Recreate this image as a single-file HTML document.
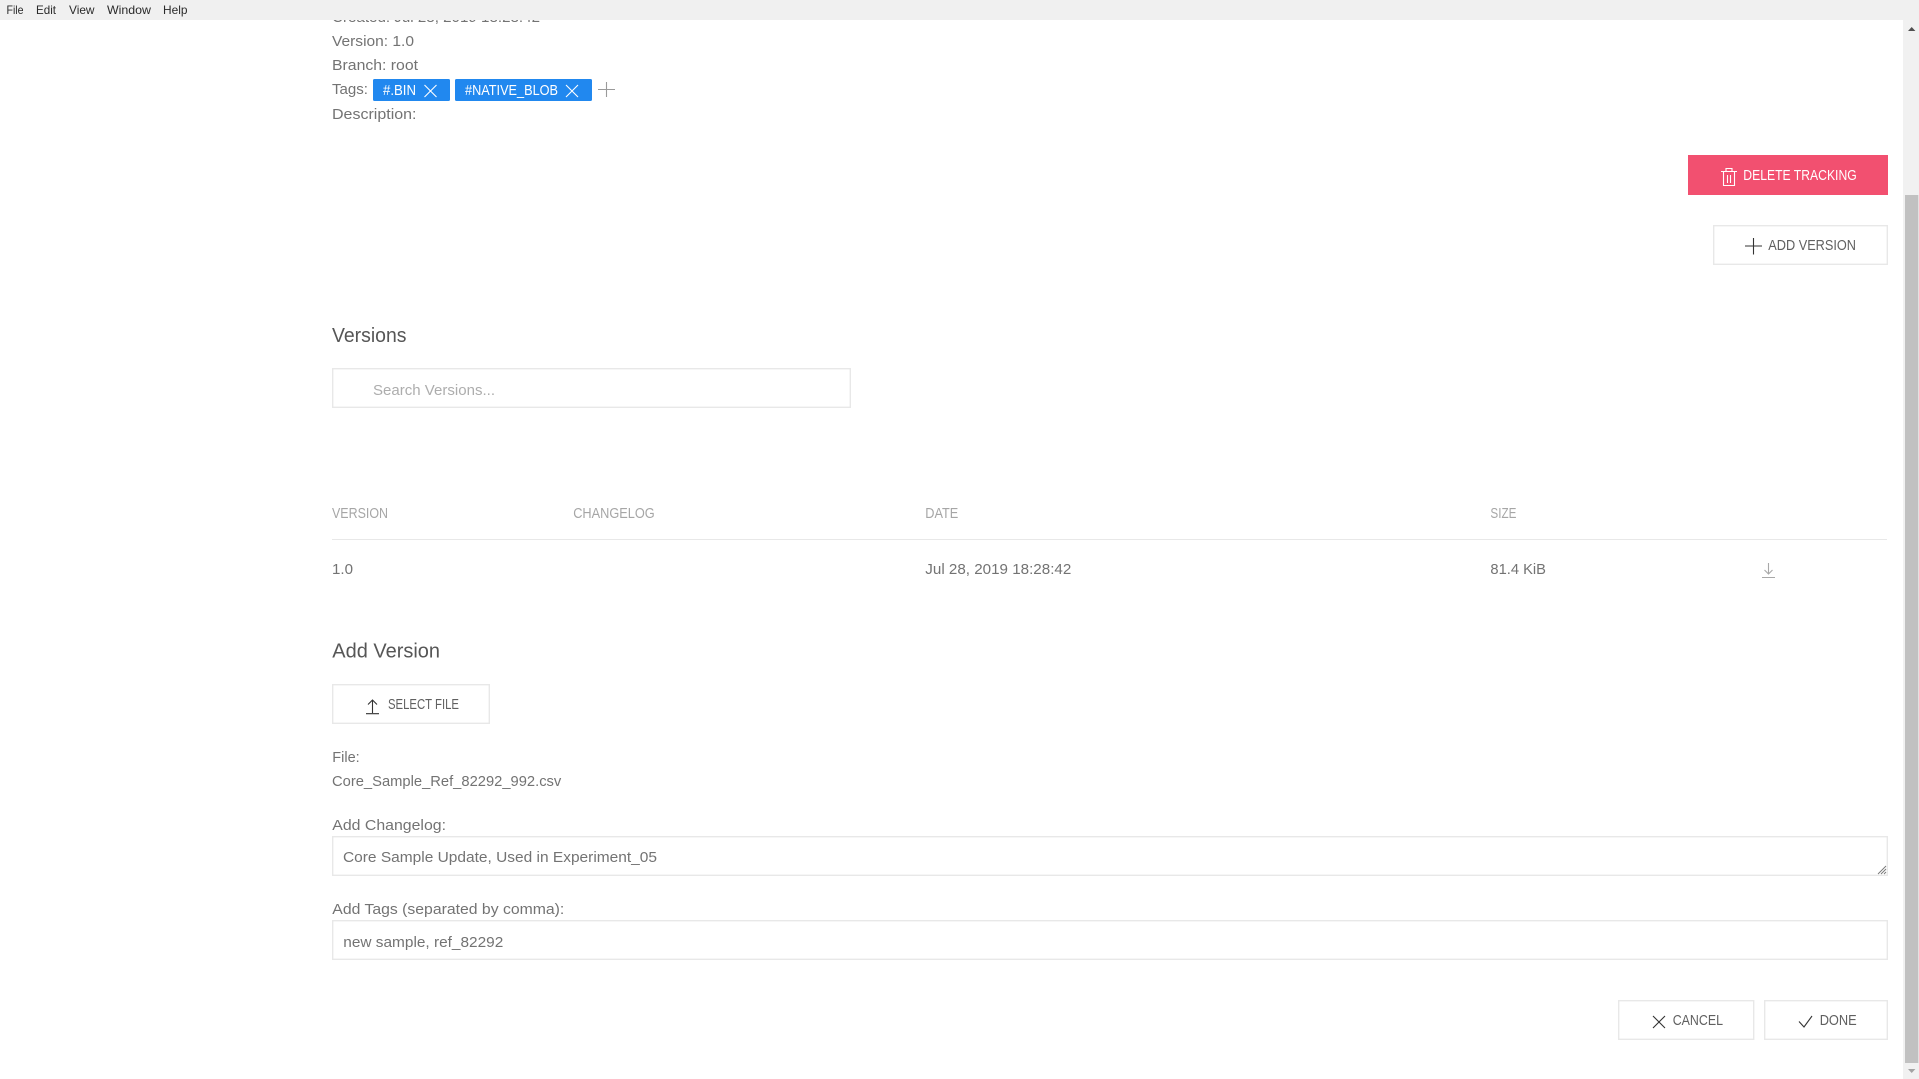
<!DOCTYPE html>
<html lang="en"><head><meta charset="utf-8"><title>Tracking</title>
<style>
html,body{margin:0;padding:0;width:1919px;height:1079px;overflow:hidden;background:#fff}
svg{display:block;position:absolute;left:0;top:0}
text{font-family:"Liberation Sans",Arial,sans-serif;font-size:15px;fill:#737373}
.m{font-size:12px;fill:#2a2a2a}
.h{font-size:20.5px;fill:#565656}
.b{font-size:14.6px;fill:#606060}
.th{font-size:14.6px;fill:#a6a6a6}
.w{fill:#fff}
.box{fill:#fff;stroke:#e8e8e8;stroke-width:1.4}
.ic{fill:none;stroke-width:1.1}
</style></head><body>
<svg width="1919" height="1079" viewBox="0 0 1919 1079" xmlns="http://www.w3.org/2000/svg">
<text x="332" y="22" textLength="208" lengthAdjust="spacingAndGlyphs">Created: Jul 28, 2019 18:28:42</text>
<rect x="0" y="0" width="1919" height="20" fill="#f0f0f0"/>
<text class="m" x="6.5" y="14" textLength="17" lengthAdjust="spacingAndGlyphs">File</text>
<text class="m" x="36" y="14" textLength="20" lengthAdjust="spacingAndGlyphs">Edit</text>
<text class="m" x="69" y="14" textLength="25.5" lengthAdjust="spacingAndGlyphs">View</text>
<text class="m" x="107" y="14" textLength="44" lengthAdjust="spacingAndGlyphs">Window</text>
<text class="m" x="163" y="14" textLength="24.5" lengthAdjust="spacingAndGlyphs">Help</text>

<rect x="1903" y="20" width="16" height="1059" fill="#f1f1f1"/>
<rect x="1905" y="195" width="13.3" height="868" fill="#c1c1c1"/>
<path d="M1908 31L1911.7 27L1915.4 31Z" fill="#505050"/>
<path d="M1908 1069L1911.7 1073L1915.4 1069Z" fill="#a3a3a3"/>

<text x="332" y="46" textLength="82" lengthAdjust="spacingAndGlyphs">Version: 1.0</text>
<text x="332" y="70" textLength="86" lengthAdjust="spacingAndGlyphs">Branch: root</text>
<text x="332" y="94" textLength="36" lengthAdjust="spacingAndGlyphs">Tags:</text>
<rect x="373" y="79" width="77" height="22" rx="1.5" fill="#2188ef"/>
<text class="b w" x="383" y="95" textLength="33" lengthAdjust="spacingAndGlyphs">#.BIN</text>
<path class="ic" stroke="#fff" d="M424.5 85L436.5 97M436.5 85L424.5 97"/>
<rect x="455" y="79" width="137" height="22" rx="1.5" fill="#2188ef"/>
<text class="b w" x="465" y="95" textLength="93" lengthAdjust="spacingAndGlyphs">#NATIVE_BLOB</text>
<path class="ic" stroke="#fff" d="M566 85L578 97M578 85L566 97"/>
<path class="ic" stroke="#9a9a9a" d="M598 89.5H615M606.5 82V97"/>
<text x="332" y="119" textLength="84.5" lengthAdjust="spacingAndGlyphs">Description:</text>

<rect x="1688" y="155" width="200" height="40" fill="#f25070"/>
<g class="ic" stroke="#fff"><path d="M1721 171.5H1737M1726 171V168.5H1732V171M1723.5 172V185.5H1734.5V172M1727.5 175V183M1730.5 175V183"/></g>
<text class="b w" x="1743.3" y="180" textLength="113.4" lengthAdjust="spacingAndGlyphs">DELETE TRACKING</text>

<rect class="box" x="1713.7" y="225.7" width="173.6" height="38.6"/>
<path class="ic" stroke="#333" d="M1745 246H1762M1753.5 238V254.5"/>
<text class="b" x="1768.3" y="250" textLength="87.7" lengthAdjust="spacingAndGlyphs">ADD VERSION</text>

<text class="h" x="332" y="342" textLength="74.5" lengthAdjust="spacingAndGlyphs">Versions</text>
<rect class="box" x="332.7" y="368.7" width="517.6" height="38.6"/>
<text x="373" y="395" textLength="122" lengthAdjust="spacingAndGlyphs" style="fill:#adadad">Search Versions...</text>

<text class="th" x="332" y="518" textLength="56" lengthAdjust="spacingAndGlyphs">VERSION</text>
<text class="th" x="573.2" y="518" textLength="81.5" lengthAdjust="spacingAndGlyphs">CHANGELOG</text>
<text class="th" x="925.3" y="518" textLength="33" lengthAdjust="spacingAndGlyphs">DATE</text>
<text class="th" x="1490.4" y="518" textLength="26" lengthAdjust="spacingAndGlyphs">SIZE</text>
<rect x="332" y="539" width="1555" height="1" fill="#e8e8e8"/>

<text x="332" y="574" textLength="21" lengthAdjust="spacingAndGlyphs">1.0</text>
<text x="925.3" y="574" textLength="146" lengthAdjust="spacingAndGlyphs">Jul 28, 2019 18:28:42</text>
<text x="1490.4" y="574" textLength="55.6" lengthAdjust="spacingAndGlyphs">81.4 KiB</text>
<path class="ic" stroke="#a8a8a8" d="M1768.5 563V574M1764.5 570L1768.5 574L1772.5 570M1762 577.5H1775"/>

<text class="h" x="332.3" y="657.6" textLength="107.7" lengthAdjust="spacingAndGlyphs">Add Version</text>
<rect class="box" x="332.7" y="684.7" width="156.6" height="38.6"/>
<path class="ic" stroke="#333" d="M372.5 700V713M368 704.5L372.5 700L377 704.5M366 713.7H379"/>
<text class="b" x="388" y="709" textLength="71" lengthAdjust="spacingAndGlyphs">SELECT FILE</text>

<text x="332.3" y="762" textLength="27.4" lengthAdjust="spacingAndGlyphs">File:</text>
<text x="332" y="786" textLength="229.3" lengthAdjust="spacingAndGlyphs">Core_Sample_Ref_82292_992.csv</text>
<text x="332.3" y="830" textLength="113.7" lengthAdjust="spacingAndGlyphs">Add Changelog:</text>
<rect class="box" x="332.7" y="836.7" width="1554.6" height="38.6"/>
<text x="343" y="862" textLength="314" lengthAdjust="spacingAndGlyphs">Core Sample Update, Used in Experiment_05</text>
<path d="M1878 874L1886 866M1881 874L1886 869M1884 874L1886 872" fill="none" stroke="#777" stroke-width="0.9"/>
<text x="332.3" y="914" textLength="232" lengthAdjust="spacingAndGlyphs">Add Tags (separated by comma):</text>
<rect class="box" x="332.7" y="920.7" width="1554.6" height="38.6"/>
<text x="343.3" y="947" textLength="160" lengthAdjust="spacingAndGlyphs">new sample, ref_82292</text>

<rect class="box" x="1618.7" y="1000.7" width="135" height="38.6"/>
<path class="ic" stroke="#333" d="M1653 1016L1665 1028M1665 1016L1653 1028"/>
<text class="b" x="1672.7" y="1025" textLength="50.3" lengthAdjust="spacingAndGlyphs">CANCEL</text>
<rect class="box" x="1764.7" y="1000.7" width="122.6" height="38.6"/>
<path class="ic" stroke="#333" d="M1799 1021.5L1804 1027L1812 1016"/>
<text class="b" x="1819.7" y="1025" textLength="37" lengthAdjust="spacingAndGlyphs">DONE</text>
</svg>
</body></html>
